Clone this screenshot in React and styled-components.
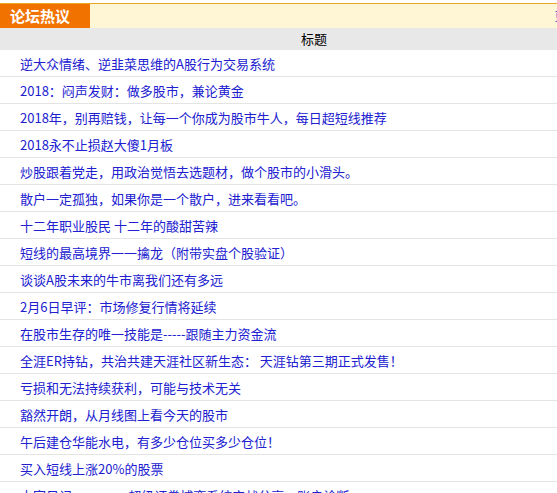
import React from "react";
import styled, { createGlobalStyle } from "styled-components";

const topics = [
  "逆大众情绪、逆韭菜思维的A股行为交易系统",
  "2018：闷声发财：做多股市，兼论黄金",
  "2018年，别再赔钱，让每一个你成为股市牛人，每日超短线推荐",
  "2018永不止损赵大傻1月板",
  "炒股跟着党走，用政治觉悟去选题材，做个股市的小滑头。",
  "散户一定孤独，如果你是一个散户，进来看看吧。",
  "十二年职业股民 十二年的酸甜苦辣",
  "短线的最高境界一一擒龙（附带实盘个股验证）",
  "谈谈A股未来的牛市离我们还有多远",
  "2月6日早评：市场修复行情将延续",
  "在股市生存的唯一技能是-----跟随主力资金流",
  "全涯ER持钻，共治共建天涯社区新生态： 天涯钻第三期正式发售！",
  "亏损和无法持续获利，可能与技术无关",
  "豁然开朗，从月线图上看今天的股市",
  "午后建仓华能水电，有多少仓位买多少仓位！",
  "买入短线上涨20%的股票",
  "大宗日记：======超级证券博弈系统实战分享：账户诊断",
];

const GlobalStyle = createGlobalStyle`
  html, body {
    margin: 0;
    padding: 0;
    background: #fff;
    overflow: hidden;
  }
  body {
    font-family: "Noto Sans CJK SC", "Liberation Sans", sans-serif;
  }
`;

const Panel = styled.div`
  width: 628px;
  padding-top: 3px;
`;

const TitleBar = styled.div`
  display: flex;
  align-items: stretch;
  height: 24px;
  border-top: 1px solid #eaa624;
  background: #fff6d6;
`;

const Tab = styled.div`
  width: 90px;
  background: #f27200;
  color: #fff;
  font-size: 15px;
  font-weight: bold;
  line-height: 24px;
  padding-left: 10px;
  box-sizing: border-box;
`;

const MoreLink = styled.a`
  margin-left: auto;
  margin-right: 36px;
  font-size: 12px;
  line-height: 24px;
  color: #2222cc;
  text-decoration: none;
`;

const HeadRow = styled.div`
  height: 22px;
  line-height: 22px;
  background: #e8e8e8;
  text-align: center;
  font-size: 13px;
  color: #000;
`;

const Row = styled.div`
  height: 26px;
  border-bottom: 1px solid #e4e4e4;
  display: flex;
  align-items: center;
  padding-left: 20px;
`;

const TopicLink = styled.a`
  font-size: 13px;
  color: #2020d0;
  text-decoration: none;
  white-space: nowrap;
`;

export default function App() {
  return (
    <Panel>
      <GlobalStyle />
      <TitleBar>
        <Tab>论坛热议</Tab>
        <MoreLink href="#">更多&gt;&gt;</MoreLink>
      </TitleBar>
      <HeadRow>标题</HeadRow>
      {topics.map((t, i) => (
        <Row key={i}>
          <TopicLink href="#">{t}</TopicLink>
        </Row>
      ))}
    </Panel>
  );
}
